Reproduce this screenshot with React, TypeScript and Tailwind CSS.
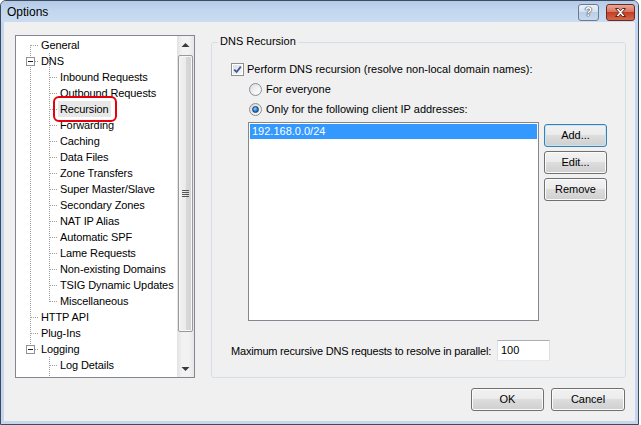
import React from "react";

const treeRows: [string, number][] = [
  ["General", 0],
  ["DNS", 0],
  ["Inbound Requests", 1],
  ["Outbound Requests", 1],
  ["Recursion", 1],
  ["Forwarding", 1],
  ["Caching", 1],
  ["Data Files", 1],
  ["Zone Transfers", 1],
  ["Super Master/Slave", 1],
  ["Secondary Zones", 1],
  ["NAT IP Alias", 1],
  ["Automatic SPF", 1],
  ["Lame Requests", 1],
  ["Non-existing Domains", 1],
  ["TSIG Dynamic Updates", 1],
  ["Miscellaneous", 1],
  ["HTTP API", 0],
  ["Plug-Ins", 0],
  ["Logging", 0],
  ["Log Details", 1],
];

function TreeLines() {
  const c = (i: number) => 45 + 16 * i;
  const dot = { stroke: "#a0a0a0", strokeDasharray: "1 1", strokeWidth: 1 };
  const boxes = [1, 19];
  const l0 = [0, 17, 18];
  const children = treeRows
    .map((r, i) => (r[1] === 1 ? i : -1))
    .filter((i) => i >= 0);
  return (
    <svg
      className="absolute left-0 top-0 pointer-events-none"
      width={161}
      height={341}
      viewBox="16 36 161 341"
    >
      <line x1={30.5} y1={45} x2={30.5} y2={349} {...dot} />
      {l0.map((i) => (
        <line key={"h" + i} x1={31} y1={c(i) + 0.5} x2={39} y2={c(i) + 0.5} {...dot} />
      ))}
      <line x1={49.5} y1={53} x2={49.5} y2={302} {...dot} />
      <line x1={49.5} y1={357} x2={49.5} y2={378} {...dot} />
      {children.map((i) => (
        <line key={"c" + i} x1={50} y1={c(i) + 0.5} x2={58} y2={c(i) + 0.5} {...dot} />
      ))}
      {boxes.map((i) => (
        <g key={"b" + i}>
          <line x1={35} y1={c(i) + 0.5} x2={39} y2={c(i) + 0.5} {...dot} />
          <rect x={26.5} y={c(i) - 3.5} width={8} height={8} fill="#ffffff" stroke="#919191" strokeWidth={1} />
          <line x1={28} y1={c(i) + 0.5} x2={33} y2={c(i) + 0.5} stroke="#1e1e1e" strokeWidth={1} />
        </g>
      ))}
    </svg>
  );
}

function ScrollBar() {
  return (
    <div className="w-[17px] h-full flex flex-col bg-[linear-gradient(to_right,#e2e2e2,#f2f2f2_30%,#f2f2f2_70%,#e6e6e6)]">
      <div className="h-[17px] flex items-center justify-center">
        <svg width="9" height="6" viewBox="0 0 9 6">
          <polygon points="0.5,5 8.5,5 4.5,1" fill="#3a3a3a" />
        </svg>
      </div>
      <div className="flex-1 pt-[2px] px-[1px]">
        <div className="h-[277px] rounded-[2px] border border-[#9a9a9a] bg-[linear-gradient(to_right,#f2f2f2,#ebebeb_50%,#d9d9d9_51%,#d2d2d2)] shadow-[inset_0_0_0_1px_#f7f7f7] flex items-center justify-center">
          <div className="flex flex-col gap-[1px]">
            <div className="w-[7px] h-[1px] bg-[#555]" />
            <div className="w-[7px] h-[1px] bg-[#555]" />
            <div className="w-[7px] h-[1px] bg-[#555]" />
            <div className="w-[7px] h-[1px] bg-[#555]" />
          </div>
        </div>
      </div>
      <div className="h-[17px] flex items-center justify-center">
        <svg width="9" height="6" viewBox="0 0 9 6">
          <polygon points="0.5,1 8.5,1 4.5,5" fill="#3a3a3a" />
        </svg>
      </div>
    </div>
  );
}

function Tree() {
  return (
    <div className="w-[180px] h-[343px] border border-[#828790] bg-white flex overflow-hidden">
      <div className="relative w-[161px] h-full pt-[1px]">
        <TreeLines />
        {treeRows.map(([t, l], i) => (
          <div key={i} className="relative h-[16px] flex items-center">
            <span
              className={
                (l === 0 ? "ml-[23px] " : "ml-[42px] ") +
                (t === "Recursion" ? "bg-[#e8e8e8] " : "") +
                "px-[2px] leading-[16px] whitespace-nowrap tracking-[-0.1px]"
              }
            >
              {t}
            </span>
          </div>
        ))}
        <div className="absolute left-[37px] top-[60px] w-[64px] h-[26px] border-2 border-[#e6000c] rounded-[6px]" />
      </div>
      <ScrollBar />
    </div>
  );
}

function WinButton({ label, focused }: { label: string; focused?: boolean }) {
  return (
    <div
      className={
        "h-[23px] rounded-[3px] border flex items-center justify-center bg-[linear-gradient(to_bottom,#f2f2f2,#ebebeb_49%,#dddddd_50%,#cfcfcf)] " +
        (focused
          ? "border-[#3c7fb1] shadow-[inset_0_0_0_1px_#c4e5f6]"
          : "border-[#707070] shadow-[inset_0_0_0_1px_#fbfbfb]")
      }
    >
      {label}
    </div>
  );
}

function CheckBox() {
  return (
    <div className="w-[13px] h-[13px] border border-[#8e8f8f] bg-white p-[1px]">
      <div className="w-full h-full bg-[linear-gradient(135deg,#dcdfe3,#f7f7f7)] flex items-center justify-center">
        <svg width="9" height="9" viewBox="0 0 9 9">
          <path d="M1.2 4.6 L3.6 7 L7.8 1.6" stroke="#3f5794" strokeWidth="1.8" fill="none" />
        </svg>
      </div>
    </div>
  );
}

function Radio({ checked }: { checked?: boolean }) {
  return (
    <div className="w-[13px] h-[13px] rounded-full border border-[#8e8f8f] bg-[linear-gradient(135deg,#d4d7db,#fcfcfc)] flex items-center justify-center">
      {checked ? (
        <div className="w-[7px] h-[7px] rounded-full bg-[radial-gradient(circle_at_40%_35%,#8fd0ff,#2a7bd0_55%,#0f3f86)] border border-[#1a3f74]" />
      ) : (
        <div className="w-[9px] h-[9px] rounded-full bg-[linear-gradient(135deg,#dfe2e6,#ffffff)]" />
      )}
    </div>
  );
}

function GroupBox() {
  return (
    <div className="relative mt-[7px] w-[415px] h-[336px] border border-[#d5dfe5] rounded-[3px] pl-[19px] pt-[19px]">
      <span className="absolute left-[6px] top-[-8px] px-[2px] bg-[#f0f0f0] leading-[13px]">
        DNS Recursion
      </span>
      <div className="h-[14px] flex items-center gap-[3px]">
        <CheckBox />
        <span className="leading-[14px]">Perform DNS recursion (resolve non-local domain names):</span>
      </div>
      <div className="mt-[6px] h-[14px] pl-[18px] flex items-center gap-[4px]">
        <Radio />
        <span className="leading-[14px]">For everyone</span>
      </div>
      <div className="mt-[6px] h-[14px] pl-[18px] flex items-center gap-[4px]">
        <Radio checked />
        <span className="leading-[14px]">Only for the following client IP addresses:</span>
      </div>
      <div className="mt-[6px] ml-[17px] flex">
        <div className="w-[291px] h-[199px] border border-[#828790] bg-white p-[1px]">
          <div className="h-[15px] bg-[#3399ff] text-white pl-[2px] leading-[15px]">192.168.0.0/24</div>
        </div>
        <div className="ml-[5px] pt-[2px] w-[63px] flex flex-col gap-[4px]">
          <WinButton label="Add..." focused />
          <WinButton label="Edit..." />
          <WinButton label="Remove" />
        </div>
      </div>
      <div className="mt-[19px] flex items-center h-[21px]">
        <span className="w-[266px] leading-[14px] whitespace-nowrap tracking-[-0.2px]">
          Maximum recursive DNS requests to resolve in parallel:
        </span>
        <div className="w-[53px] h-[21px] border border-[#abadb3] border-l-[#e2e3ea] border-r-[#dbdfe6] border-b-[#e3e9ef] bg-white pl-[3px] flex items-center">
          100
        </div>
      </div>
    </div>
  );
}

export default function App() {
  return (
    <div className="w-[641px] h-[425px] bg-white font-['Liberation_Sans',Arial,sans-serif] text-[11px] text-black overflow-hidden">
      <div className="w-[639px] h-[425px] border border-[#3d4b5e] rounded-t-[6px] flex flex-col bg-[#c4d7ef] overflow-hidden">
        {/* title bar */}
        <div className="h-[21px] flex items-center pl-[6px] pr-[3px] bg-[linear-gradient(to_bottom,#b3cae7,#c2d6ee_45%,#cadcf1)]">
          <span className="text-[12px] leading-[16px] flex-1">Options</span>
          <div className="flex items-center gap-[7px] mt-[1px]">
            <div className="w-[21px] h-[17px] rounded-[3px] border border-[#6b7a90] bg-[linear-gradient(to_bottom,#eaf1f9,#d6e2f0_45%,#bccee6_50%,#c9d9ee)] flex items-center justify-center text-[12px] font-bold text-white leading-[12px] [text-shadow:0_0_1px_#2b3a55,0_0_1px_#2b3a55,0_0_1px_#2b3a55]">
              ?
            </div>
            <div className="w-[29px] h-[17px] rounded-[3px] border border-[#6e2a20] bg-[linear-gradient(to_bottom,#eaa797,#d9745d_45%,#c43e22_50%,#d2694c)] flex items-center justify-center">
              <svg width="13" height="11" viewBox="0 0 13 11">
                <path
                  d="M1.5 1.5 L4.5 1.5 L6.5 3.8 L8.5 1.5 L11.5 1.5 L8 5.5 L11.5 9.5 L8.5 9.5 L6.5 7.2 L4.5 9.5 L1.5 9.5 L5 5.5 Z"
                  fill="#ffffff"
                  stroke="#4a1a12"
                  strokeWidth="0.9"
                />
              </svg>
            </div>
          </div>
        </div>
        {/* frame + client */}
        <div className="flex-1 px-[3px] pb-[3px]">
          <div className="w-full h-full bg-[#f0f0f0] pl-[11px] pt-[13px]">
            <div className="flex gap-[16px] w-[611px]">
              <Tree />
              <GroupBox />
            </div>
            <div className="mt-[10px] w-[611px] pr-[1px] flex justify-end gap-[7px]">
              <div className="w-[73px]">
                <WinButton label="OK" />
              </div>
              <div className="w-[74px]">
                <WinButton label="Cancel" />
              </div>
            </div>
          </div>
        </div>
      </div>
    </div>
  );
}
